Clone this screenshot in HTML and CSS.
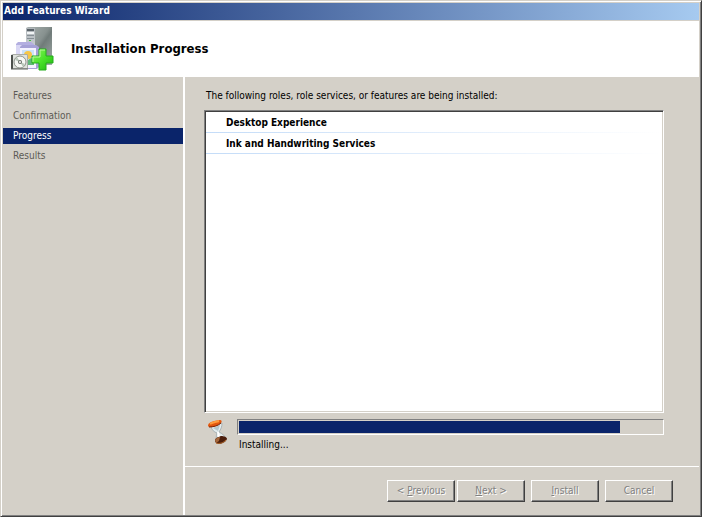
FILE: index.html
```html
<!DOCTYPE html>
<html lang="en">
<head>
  <meta charset="UTF-8">
  <title>Add Features Wizard</title>
  <link rel="stylesheet" href="styles.css">
</head>
<body>

<div class="window">
  <div class="title-bar">Add Features Wizard</div>

  <header class="header">
    <svg class="header-icon" width="44" height="44" viewBox="0 0 44 44" aria-hidden="true">
      <defs>
        <linearGradient id="tower" x1="0" y1="0" x2="1" y2="1">
          <stop offset="0" stop-color="#a9b1b0"/>
          <stop offset=".45" stop-color="#87918f"/>
          <stop offset=".55" stop-color="#707b79"/>
          <stop offset="1" stop-color="#a3adab"/>
        </linearGradient>
        <linearGradient id="front" x1="0" y1="0" x2="0" y2="1">
          <stop offset="0" stop-color="#b0b6ba"/>
          <stop offset="1" stop-color="#dce0e4"/>
        </linearGradient>
        <linearGradient id="plus" x1="0" y1="0" x2="1" y2="1">
          <stop offset="0" stop-color="#8cf25f"/>
          <stop offset=".5" stop-color="#4be32b"/>
          <stop offset="1" stop-color="#1fb512"/>
        </linearGradient>
      </defs>
      <!-- server tower -->
      <path d="M16 1l2-1h24v38H24l-8-7z" fill="url(#tower)"/>
      <path d="M16 1h9v34l-9-3z" fill="url(#front)"/>
      <path d="M17 2h7v2h-7z" fill="#596268"/>
      <path d="M17 5h7v2h-7z" fill="#f2f5f6"/>
      <path d="M17 8h7v1h-7zM17 11h7v1h-7z" fill="#868f95"/>
      <path d="M19 13h2v1h-2z" fill="#49b845"/>
      <!-- software boxes -->
      <path d="M6 17l2-2h13l3 2v17H6z" fill="#b3afe0"/>
      <path d="M6 18h16v15H6z" fill="#d9d7f4"/>
      <path d="M10 20l2-2h14l3 2v20l-2 2H10z" fill="#a5a1d6"/>
      <path d="M10 21h16v20H10z" fill="#f4f3ff"/>
      <path d="M12 23h12v14H12z" fill="#c9e2fb"/>
      <circle cx="18" cy="28" r="4" fill="#f6c648"/>
      <path d="M17 34l4-3 3 2v5h-7z" fill="#5fb879"/>
      <!-- disc case -->
      <path d="M1 28l2-1h14l1 1v14H1z" fill="#a9aca8"/>
      <path d="M1 28h2v14H1z" fill="#4c504c"/>
      <path d="M3 28h14v13H3z" fill="#dfe2dd"/>
      <circle cx="10" cy="35" r="6" fill="#f7f8f5" stroke="#8d928b"/>
      <path d="M10 35l-5-2 2-3zM10 35l5 2-2 3z" fill="#b9c7bb"/>
      <circle cx="10" cy="35" r="2" fill="#666c66"/>
      <circle cx="10" cy="35" r="1" fill="#fff"/>
      <path d="M1 42h17" stroke="#5f635f"/>
      <!-- green plus -->
      <path d="M29 22h7v7h7v7h-7v7h-7v-7h-7v-7h7z" fill="url(#plus)" stroke="#25ad1d" stroke-linejoin="round"/>
      <path d="M30 30v-7h5M23 35v-5h7" fill="none" stroke="#b9f79c"/>
    </svg>
    <h1>Installation Progress</h1>
  </header>

  <div class="body">
    <nav class="steps">
      <a href="#features">Features</a>
      <a href="#confirmation">Confirmation</a>
      <a href="#progress" class="current" aria-current="step">Progress</a>
      <a href="#results">Results</a>
    </nav>

    <div class="page">
      <main class="content" id="progress">
        <p class="intro">The following roles, role services, or features are being installed:</p>
        <ul class="feature-list">
          <li>Desktop Experience</li>
          <li>Ink and Handwriting Services</li>
        </ul>
        <div class="status">
          <svg class="hourglass" width="20" height="26" viewBox="0 0 20 26" aria-hidden="true">
            <!-- glass -->
            <path d="M4 8l11-4c0 4-1 6-3 9 4 2 6 4 7 7l-9 3c-1-3-1-6 0-9-3-1-5-3-6-6z" fill="#e3ecee" stroke="#a9b3b5"/>
            <path d="M6 9l7-3-2 6z" fill="#b7c9ce"/>
            <path d="M11 13l1 5" stroke="#fff" stroke-width="2"/>
            <!-- top cap -->
            <path d="M1 7c0-3 3-4 6-5l6-1c2 0 2 2 1 3-2 2-5 3-8 4-3 0-5 0-5-1z" fill="#e2570f"/>
            <path d="M3 5c3-2 6-2 9-3" fill="none" stroke="#ff9c3d" stroke-width="2"/>
            <path d="M2 8c4 0 9-1 12-4" fill="none" stroke="#7a260a"/>
            <!-- sand and base -->
            <path d="M8 21c1-3 4-3 6-4 3 0 6 1 6 3-1 3-4 4-7 5-3 0-5-1-5-4z" fill="#4c1e0c"/>
            <path d="M8 21c1-2 3-3 5-3l-1 4-3 2z" fill="#a5673c"/>
            <path d="M9 24c4 1 7 0 10-3" fill="none" stroke="#b86c2c"/>
          </svg>
          <div class="status-text">
            <progress id="installBar" value="90" max="100"></progress>
            <label for="installBar">Installing...</label>
          </div>
        </div>
      </main>

      <footer class="buttons">
        <button type="button" disabled>&lt; <u>P</u>revious</button>
        <button type="button" disabled><u>N</u>ext &gt;</button>
        <button type="button" class="spaced" disabled><u>I</u>nstall</button>
        <button type="button" class="spaced" disabled>Cancel</button>
      </footer>
    </div>
  </div>
</div>

</body>
</html>
```

FILE: styles.css
```css
* {
  box-sizing: border-box;
}

body {
  margin: 0;
  background: #d4d0c8;
  color: #000;
  font-family: Tahoma, "DejaVu Sans Condensed", sans-serif;
  font-size: 10px;
  line-height: 16px;
}

.window {
  display: flex;
  flex-direction: column;
  min-height: 100vh;
  padding: 1px 0 0 1px;
  border: 1px solid;
  border-color: #d4d0c8 #404040 #404040 #d4d0c8;
  box-shadow: inset 1px 1px #fff, inset -1px -1px #808080;
}

.title-bar {
  height: 17px;
  margin: 1px 2px 0 1px;
  padding-left: 1px;
  background: linear-gradient(to right, #0a246a, #a6caf0);
  color: #fff;
  font-weight: bold;
}

.header {
  display: flex;
  align-items: center;
  gap: 17px;
  height: 57px;
  margin: 0 2px 0 1px;
  padding-left: 7px;
  background: #fff;
  border-top: 1px solid #d4d0c8;
}

.header h1 {
  margin: 0;
  font-size: 13px;
}

.body {
  display: flex;
  flex: 1;
  margin: 0 2px 1px 1px;
}

/* Wizard steps */
.steps {
  display: flex;
  flex-direction: column;
  gap: 4px;
  width: 182px;
  padding-top: 11px;
  border-right: 2px solid #fff;
}

.steps a {
  padding-left: 10px;
  color: #5c5a55;
  text-decoration: none;
}

.steps .current {
  background: #0a246a;
  color: #fff;
}

.page {
  display: flex;
  flex: 1;
  flex-direction: column;
}

.content {
  display: flex;
  flex: 1;
  flex-direction: column;
  padding: 11px 35px 13px 19px;
}

.intro {
  margin: 0 0 6px 2px;
}

.feature-list {
  flex: 1;
  margin: 0;
  padding: 1px 0 0;
  list-style: none;
  background: #fff;
  border: 1px solid;
  border-color: #808080 #fff #fff #808080;
  box-shadow: inset 1px 1px #404040, inset -1px -1px #d4d0c8;
}

.feature-list li {
  height: 21px;
  margin: 0 1px;
  padding: 3px 0 0 20px;
  font-weight: bold;
  background: linear-gradient(to right, #c4dcf8, #fff) bottom / 100% 1px no-repeat;
}

/* Progress bar */
.status {
  display: flex;
  gap: 10px;
  padding: 6px 0 0 3px;
}

.status-text {
  flex: 1;
}

progress {
  display: block;
  width: 100%;
  height: 16px;
  padding: 1px;
  appearance: none;
  background: #d4d0c8;
  border: 1px solid;
  border-color: #808080 #fff #fff #808080;
}

progress::-webkit-progress-bar {
  background: #d4d0c8;
}

progress::-webkit-progress-value {
  background: #0a246a;
}

.status label {
  display: block;
  padding: 2px 0 0 2px;
}

.buttons {
  display: flex;
  justify-content: flex-end;
  gap: 2px;
  padding: 13px 26px 13px;
  border-top: 1px solid #fff;
}

.buttons button {
  width: 68px;
  height: 22px;
  padding: 0;
  background: #d4d0c8;
  border: 1px solid;
  border-color: #fff #404040 #404040 #fff;
  box-shadow: inset -1px -1px #808080;
  color: #808080;
  font: inherit;
  text-shadow: 1px 1px #fff;
}

.buttons .spaced {
  margin-left: 4px;
}
```
